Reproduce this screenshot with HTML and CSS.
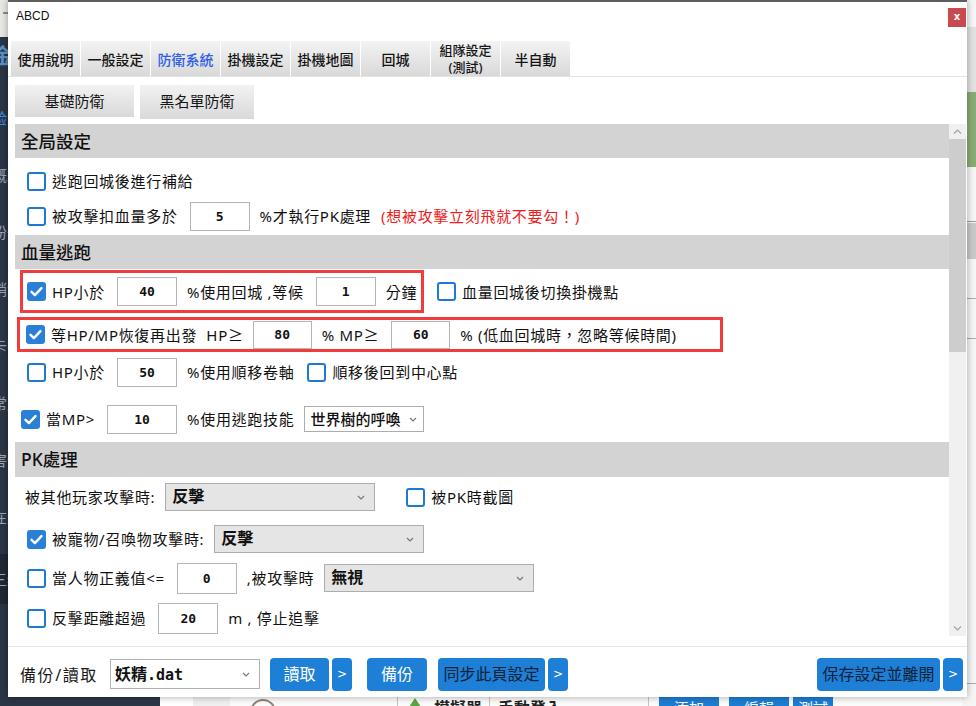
FILE: index.html
```html
<!DOCTYPE html>
<html lang="zh-TW">
<head>
<meta charset="UTF-8">
<title>ABCD</title>
<link rel="stylesheet" href="styles.css">
</head>
<body>
<div class="desk">
  <aside class="side">
    <div class="side-top"><span class="side-dash"></span></div>
    <ul class="side-menu">
      <li class="side-logo">金统</li>
      <li class="side-on">验证</li>
      <li>概况</li>
      <li>纷争</li>
      <li>销售</li>
      <li>卡密</li>
      <li>常用</li>
      <li>害怕</li>
      <li>在线</li>
      <li class="side-band">三级</li>
    </ul>
  </aside>

  <main class="app">
    <div class="app-body"></div>
    <div class="toolbar">
      <span class="tb-blank"></span>
      <span class="tb-grey"></span>
      <span class="tb-avatar"><i></i></span>
      <span class="tb-tri"></span>
      <span class="tb-text">模擬器</span>
      <span class="tb-text tb-sep">手動登入</span>
      <span class="tb-drop"></span>
      <span class="tb-btn">添加</span>
      <span class="tb-btn">編輯</span>
      <span class="tb-btn tb-btn-sm">測試</span>
    </div>
  </main>

  <div class="edge">
    <div class="edge-a"></div>
    <div class="edge-b"></div>
    <div class="edge-map"></div>
    <div class="edge-c"></div>
    <div class="edge-d"></div>
    <div class="edge-e"></div>
    <div class="edge-e"></div>
    <div class="edge-f"></div>
  </div>
</div>

<section class="dlg">
  <header class="dlg-title">
    <span class="dlg-name">ABCD</span>
    <span class="dlg-close">x</span>
  </header>

  <nav class="tabs">
    <span class="tab">使用說明</span>
    <span class="tab">一般設定</span>
    <span class="tab tab-on">防衛系統</span>
    <span class="tab">掛機設定</span>
    <span class="tab">掛機地圖</span>
    <span class="tab">回城</span>
    <span class="tab tab-two">組隊設定<br>(測試)</span>
    <span class="tab">半自動</span>
  </nav>

  <div class="subtabs">
    <span class="subtab">基礎防衛</span>
    <span class="subtab subtab-wide">黑名單防衛</span>
  </div>

  <div class="frame">
    <div class="panel">
      <h3 class="sec">全局設定</h3>
      <div class="row row-1">
        <span class="cb"></span>
        <span class="lbl">逃跑回城後進行補給</span>
      </div>
      <div class="row row-2">
        <span class="cb"></span>
        <span class="lbl">被攻擊扣血量多於</span>
        <input class="num" type="text" value="5">
        <span class="lbl">%才執行PK處理</span>
        <span class="lbl warn">(想被攻擊立刻飛就不要勾！)</span>
      </div>

      <h3 class="sec sec-2">血量逃跑</h3>
      <div class="row row-3">
        <div class="mark mark-a">
          <span class="cb on"><svg viewBox="0 0 19 19"><path d="M4.5 9.8l3.4 3.3 6.6-7"/></svg></span>
          <span class="lbl">HP小於</span>
          <input class="num" type="text" value="40">
          <span class="lbl">%使用回城 ,等候</span>
          <input class="num" type="text" value="1">
          <span class="lbl">分鐘</span>
        </div>
        <span class="cb cb-gap"></span>
        <span class="lbl">血量回城後切換掛機點</span>
      </div>
      <div class="row row-4">
        <div class="mark mark-b">
          <span class="cb on"><svg viewBox="0 0 19 19"><path d="M4.5 9.8l3.4 3.3 6.6-7"/></svg></span>
          <span class="lbl">等HP/MP恢復再出發&nbsp; HP≥</span>
          <input class="num num-s num-hp" type="text" value="80">
          <span class="lbl">% MP≥</span>
          <input class="num num-s" type="text" value="60">
          <span class="lbl">% (低血回城時，忽略等候時間)</span>
        </div>
      </div>
      <div class="row row-5">
        <span class="cb"></span>
        <span class="lbl">HP小於</span>
        <input class="num" type="text" value="50">
        <span class="lbl">%使用順移卷軸</span>
        <span class="cb cb-gap"></span>
        <span class="lbl">順移後回到中心點</span>
      </div>
      <div class="row row-6">
        <span class="cb on"><svg viewBox="0 0 19 19"><path d="M4.5 9.8l3.4 3.3 6.6-7"/></svg></span>
        <span class="lbl">當MP&gt;</span>
        <input class="num num-w" type="text" value="10">
        <span class="lbl">%使用逃跑技能</span>
        <div class="sel sel-skill">
          <span>世界樹的呼喚</span>
          <svg class="chev" viewBox="0 0 8 5"><path d="M1 1l3 3 3-3"/></svg>
        </div>
      </div>

      <h3 class="sec sec-3">PK處理</h3>
      <div class="row row-pk1">
        <span class="lbl">被其他玩家攻擊時:</span>
        <div class="sel sel-grey">
          <span>反擊</span>
          <svg class="chev" viewBox="0 0 8 5"><path d="M1 1l3 3 3-3"/></svg>
        </div>
        <span class="cb cb-far"></span>
        <span class="lbl">被PK時截圖</span>
      </div>
      <div class="row row-pk2">
        <span class="cb on"><svg viewBox="0 0 19 19"><path d="M4.5 9.8l3.4 3.3 6.6-7"/></svg></span>
        <span class="lbl">被寵物/召喚物攻擊時:</span>
        <div class="sel sel-grey">
          <span>反擊</span>
          <svg class="chev" viewBox="0 0 8 5"><path d="M1 1l3 3 3-3"/></svg>
        </div>
      </div>
      <div class="row row-pk3">
        <span class="cb"></span>
        <span class="lbl">當人物正義值&lt;=</span>
        <input class="num num-t" type="text" value="0">
        <span class="lbl">,被攻擊時</span>
        <div class="sel sel-grey">
          <span>無視</span>
          <svg class="chev" viewBox="0 0 8 5"><path d="M1 1l3 3 3-3"/></svg>
        </div>
      </div>
      <div class="row row-pk4">
        <span class="cb"></span>
        <span class="lbl">反擊距離超過</span>
        <input class="num num-t" type="text" value="20">
        <span class="lbl">m , 停止追擊</span>
      </div>
    </div>

    <div class="vscroll">
      <span class="vs-btn"><svg viewBox="0 0 9 5"><path d="M1 4.5l3.5-3.5 3.5 3.5"/></svg></span>
      <span class="vs-thumb"></span>
      <span class="vs-track"></span>
      <span class="vs-btn"><svg viewBox="0 0 9 5"><path d="M1 0.5l3.5 3.5 3.5-3.5"/></svg></span>
    </div>
  </div>

  <footer class="foot">
    <span class="foot-lbl">備份/讀取</span>
    <div class="sel sel-file">
      <span>妖精<b class="mono">.dat</b></span>
      <svg class="chev" viewBox="0 0 8 5"><path d="M1 1l3 3 3-3"/></svg>
    </div>
    <span class="btn btn-load">讀取</span>
    <span class="btn btn-more">&gt;</span>
    <span class="btn btn-backup">備份</span>
    <span class="btn btn-dark btn-sync">同步此頁設定</span>
    <span class="btn btn-more">&gt;</span>
    <span class="btn btn-dark btn-save">保存設定並離開</span>
    <span class="btn btn-more">&gt;</span>
  </footer>
</section>
</body>
</html>
```

FILE: styles.css
```css
* {
	box-sizing: border-box;
}

html,
body {
	margin: 0;
	padding: 0;
}

body {
	position: relative;
	width: 976px;
	height: 706px;
	overflow: hidden;
	font-family: "Noto Sans", "Noto Sans CJK TC", sans-serif;
	color: #111;
	background: #f4f4f4;
}

/* desktop behind the dialog */

.desk {
	display: grid;
	grid-template-columns: 160px 1fr 14px;
	height: 706px;
}

.side {
	background: #2a3546;
	overflow: hidden;
}

.side-top {
	height: 37px;
	padding: 12px 0 0 3px;
	background: #e9e7e4;
}

.side-dash {
	display: block;
	width: 6px;
	height: 2px;
	background: #8d8d8d;
}

.side-menu {
	margin: 0;
	padding: 0;
	list-style: none;
}

.side-menu li {
	height: 20px;
	margin-top: 37px;
	font-size: 15px;
	line-height: 20px;
	color: #9aa6b6;
	text-indent: -8px;
	white-space: nowrap;
}

.side-menu .side-logo {
	margin-top: 8px;
	font-size: 21px;
	font-weight: 700;
	color: #5b8fc4;
}

.side-menu .side-on {
	margin-top: 43px;
	color: #3c8de0;
}

.side-menu .side-band {
	height: 50px;
	margin-top: 27px;
	line-height: 50px;
	background: #1f2834;
}

.app {
	display: flex;
	flex-direction: column;
	min-width: 0;
}

.app-body {
	flex: 1;
	background: #f4f4f4;
}

.toolbar {
	display: flex;
	align-items: flex-start;
	height: 9px;
	overflow: hidden;
	background: #fbfbfb;
}

.toolbar > span {
	flex: none;
}

.tb-blank {
	width: 33px;
	height: 9px;
	background: #fff;
}

.tb-grey {
	width: 37px;
	height: 9px;
	background: #efefef;
}

.tb-avatar {
	width: 168px;
	height: 9px;
	padding: 2px 0 0 20px;
	border-right: 1px solid #c4c4c4;
}

.tb-avatar i {
	display: block;
	width: 26px;
	height: 26px;
	border: 2px solid #8f8577;
	border-radius: 50%;
}

.tb-tri {
	width: 0;
	height: 0;
	margin: 1px 0 0 9px;
	border-left: 8px solid transparent;
	border-right: 8px solid transparent;
	border-bottom: 12px solid #5aa646;
}

.tb-text {
	margin-left: 11px;
	padding-top: 1px;
	font-size: 16px;
	font-weight: 700;
	line-height: 20px;
	color: #222;
}

.tb-sep {
	margin-left: 7px;
	padding-left: 8px;
	border-left: 1px solid #c4c4c4;
}

.tb-drop {
	width: 87px;
	height: 9px;
	border-right: 1px solid #c4c4c4;
}

.tb-btn {
	width: 60px;
	height: 9px;
	margin-left: 10px;
	padding-top: 1px;
	font-size: 15px;
	line-height: 20px;
	text-align: center;
	color: #fff;
	background: #1d7dd3;
}

.tb-btn-sm {
	width: 40px;
	margin-left: 4px;
}

.edge {
	display: flex;
	flex-direction: column;
	background: #f5f5f5;
}

.edge-a {
	height: 27px;
	background: #f6f6f6;
}

.edge-b {
	height: 65px;
	background: #e2e2e2;
}

.edge-map {
	height: 75px;
	background: #8aac74;
}

.edge-c {
	height: 55px;
	border-bottom: 1px solid #9c9c9c;
}

.edge-d {
	height: 36px;
	margin-top: 1px;
	background: #c9c9c9;
}

.edge-e {
	height: 40px;
	border-bottom: 1px solid #acacac;
}

.edge-f {
	height: 345px;
	border-bottom: 1px solid #acacac;
}

/* the settings window */

.dlg {
	position: absolute;
	left: 8px;
	top: 0;
	display: flex;
	flex-direction: column;
	width: 959px;
	height: 697px;
	background: #fff;
	border-top: 2px solid #5e5e5e;
	box-shadow: 0 0 7px rgba(0, 0, 0, 0.35);
}

.dlg-title {
	display: flex;
	align-items: flex-start;
	height: 38px;
	padding: 0 1px 0 8px;
}

.dlg-name {
	margin-top: 6px;
	font-family: "Liberation Sans", Arial, sans-serif;
	font-size: 12px;
	line-height: 16px;
	color: #111;
}

.dlg-close {
	width: 18px;
	height: 19px;
	margin: 6px 0 0 auto;
	font-family: "DejaVu Sans", sans-serif;
	font-size: 10px;
	font-weight: 700;
	line-height: 18px;
	text-align: center;
	color: #fff;
	background: #c94a4e;
}

.tabs {
	display: flex;
	gap: 1px;
	height: 36px;
	margin-top: 1px;
	padding-left: 3px;
	border-bottom: 1px solid #e4e4e4;
}

.tab {
	width: 69px;
	height: 35px;
	padding-top: 3px;
	overflow: hidden;
	font-size: 14px;
	font-weight: 500;
	line-height: 32px;
	text-align: center;
	color: #151515;
	background: linear-gradient(#f3f3f3, #d9d9d9);
}

.tab-on {
	color: #2d5fe8;
}

.tab-two {
	padding-top: 1px;
	font-size: 13px;
	line-height: 17px;
}

.subtabs {
	display: flex;
	align-items: flex-start;
	gap: 6px;
	height: 34px;
	margin-top: 8px;
	padding-left: 7px;
}

.subtab {
	width: 119px;
	height: 32px;
	font-size: 15px;
	line-height: 32px;
	text-align: center;
	color: #151515;
	background: linear-gradient(#f2f2f2, #d9d9d9);
}

.subtab-wide {
	width: 114px;
	height: 34px;
	line-height: 33px;
}

.frame {
	display: flex;
	width: 951px;
	height: 512px;
	margin: 5px 0 0 7px;
}

.panel {
	flex: 1;
	min-width: 0;
	overflow: hidden;
}

.sec {
	height: 34px;
	margin: 0;
	padding-left: 6px;
	font-size: 17.5px;
	font-weight: 500;
	line-height: 34px;
	color: #111;
	background: #d3d3d3;
}

.sec-2 {
	margin-top: 2px;
}

.sec-3 {
	height: 35px;
	margin-top: 6px;
	line-height: 35px;
}

.row {
	display: flex;
	align-items: center;
	height: 34px;
	padding-left: 12px;
	white-space: nowrap;
}

.row-1 {
	height: 36px;
	margin-top: 5px;
}

.row-3 {
	height: 43px;
	margin-top: 1px;
	padding-left: 5px;
}

.row-4 {
	height: 35px;
	margin-top: 4px;
	padding-left: 2px;
}

.row-5 {
	margin-top: 3px;
}

.row-6 {
	margin-top: 13px;
	padding-left: 6px;
}

.row-pk1 {
	margin-top: 3px;
	padding-left: 10px;
}

.row-pk2 {
	margin-top: 8px;
}

.row-pk3 {
	margin-top: 5px;
}

.row-pk4 {
	margin-top: 6px;
}

.mark {
	display: flex;
	align-items: center;
	height: 100%;
	border: 3px solid #f03c3c;
}

.mark-a {
	width: 404px;
	padding-left: 4px;
}

.mark-b {
	width: 706px;
	padding-left: 6px;
}

.lbl {
	font-size: 15px;
	line-height: 20px;
	letter-spacing: 0.7px;
	color: #111;
}

.warn {
	margin-left: 10px;
	color: #f01b1b;
}

.cb {
	flex: none;
	width: 19px;
	height: 19px;
	margin-right: 6px;
	border: 2px solid #1f78d1;
	border-radius: 3px;
	background: #fff;
}

.cb.on {
	border: 0;
	background: #2a80d6;
}

.cb svg {
	display: block;
	width: 19px;
	height: 19px;
	fill: none;
	stroke: #fff;
	stroke-width: 2.4;
	stroke-linecap: round;
	stroke-linejoin: round;
}

.cb-gap {
	margin-left: 13px;
}

.cb-far {
	margin-left: 21px;
}

.num {
	flex: none;
	width: 60px;
	height: 29px;
	margin: 0 10px 0 12px;
	padding: 0;
	border: 1px solid #b5b5b5;
	font-family: "DejaVu Sans Mono", monospace;
	font-size: 13px;
	font-weight: 700;
	text-align: center;
	color: #111;
	background: #fff;
}

.num-s {
	width: 59px;
	height: 28px;
}

.num-hp {
	margin-left: 9px;
}

.num-w {
	width: 70px;
}

.num-t {
	height: 31px;
}

.sel {
	flex: none;
	display: flex;
	align-items: center;
	justify-content: space-between;
	width: 210px;
	height: 28px;
	padding: 0 9px 0 6px;
	border: 1px solid #adadad;
	font-size: 16px;
	font-weight: 700;
	line-height: 20px;
	color: #111;
	background: #e5e5e5;
}

.sel > span {
	margin-top: -3px;
}

.sel-grey {
	margin: 0 10px;
}

.sel-skill {
	width: 120px;
	height: 26px;
	margin-left: 10px;
	padding: 0 6px 0 5px;
	font-size: 15px;
	font-weight: 500;
	background: #fff;
}

.sel-skill > span {
	margin-top: 0;
}

.chev {
	width: 8px;
	height: 5px;
	fill: none;
	stroke: #777;
	stroke-width: 1.2;
}

.vscroll {
	display: flex;
	flex-direction: column;
	width: 17px;
	background: #f0f0f0;
}

.vs-btn {
	display: flex;
	align-items: center;
	justify-content: center;
	height: 15px;
}

.vs-btn svg {
	width: 9px;
	height: 5px;
	fill: none;
	stroke: #a3a3a3;
	stroke-width: 1.2;
}

.vs-thumb {
	height: 213px;
	background: #cdcdcd;
}

.vs-track {
	flex: 1;
}

.foot {
	display: flex;
	align-items: center;
	height: 51px;
	margin-top: 10px;
	padding: 4px 4px 0 12px;
	border-top: 1px solid #e6e6e6;
}

.foot-lbl {
	font-size: 16px;
	letter-spacing: 1.6px;
	color: #1a1a1a;
}

.sel-file {
	width: 150px;
	height: 30px;
	margin-left: 12px;
	padding-left: 4px;
	border-color: #b2b2b2;
	background: #fff;
}

.sel-file > span {
	margin-top: 0;
}

.mono {
	font-family: "DejaVu Sans Mono", monospace;
	font-size: 15px;
}

.btn {
	flex: none;
	height: 33px;
	border-radius: 4px;
	font-size: 16px;
	line-height: 33px;
	text-align: center;
	color: #fff;
	background: #1d7fd6;
}

.btn-load {
	width: 59px;
	margin-left: 10px;
}

.btn-more {
	width: 20px;
	margin-left: 3px;
	font-family: "DejaVu Sans", sans-serif;
	font-size: 12px;
}

.btn-backup {
	width: 60px;
	margin-left: 15px;
}

.btn-dark {
	color: #0f2238;
}

.btn-sync {
	width: 107px;
	margin-left: 11px;
}

.btn-save {
	width: 123px;
	margin-left: auto;
}
```
